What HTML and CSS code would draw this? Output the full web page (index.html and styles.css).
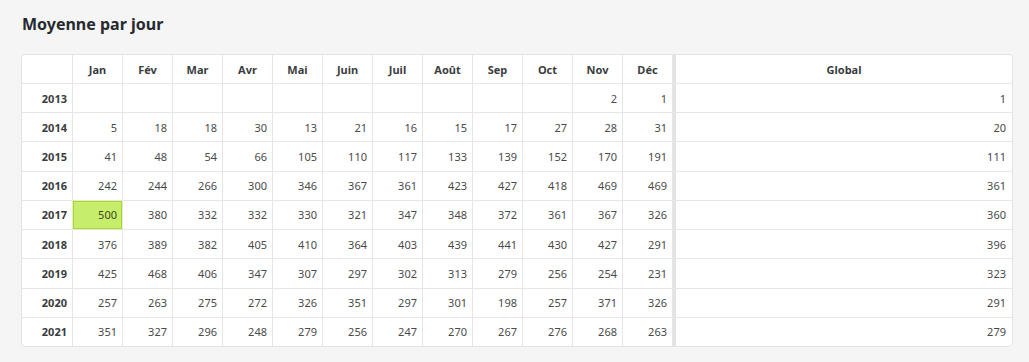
FILE: index.html
```html
<!DOCTYPE html>
<html lang="fr">
<head>
<meta charset="utf-8">
<title>Moyenne par jour</title>
<link rel="stylesheet" href="styles.css">
</head>
<body>
<section class="panel">
  <h2 class="title">Moyenne par jour</h2>
  <div class="table-wrap">
    <table class="stats">
      <colgroup>
        <col class="c-year">
        <col class="c-m"><col class="c-m"><col class="c-m"><col class="c-m"><col class="c-m"><col class="c-m">
        <col class="c-m"><col class="c-m"><col class="c-m"><col class="c-m"><col class="c-m"><col class="c-m">
        <col class="c-global">
      </colgroup>
      <thead>
        <tr>
          <th></th>
          <th>Jan</th><th>Fév</th><th>Mar</th><th>Avr</th><th>Mai</th><th>Juin</th>
          <th>Juil</th><th>Août</th><th>Sep</th><th>Oct</th><th>Nov</th><th>Déc</th>
          <th class="global">Global</th>
        </tr>
      </thead>
      <tbody>
        <tr><th>2013</th><td></td><td></td><td></td><td></td><td></td><td></td><td></td><td></td><td></td><td></td><td>2</td><td>1</td><td class="global">1</td></tr>
        <tr><th>2014</th><td>5</td><td>18</td><td>18</td><td>30</td><td>13</td><td>21</td><td>16</td><td>15</td><td>17</td><td>27</td><td>28</td><td>31</td><td class="global">20</td></tr>
        <tr><th>2015</th><td>41</td><td>48</td><td>54</td><td>66</td><td>105</td><td>110</td><td>117</td><td>133</td><td>139</td><td>152</td><td>170</td><td>191</td><td class="global">111</td></tr>
        <tr><th>2016</th><td>242</td><td>244</td><td>266</td><td>300</td><td>346</td><td>367</td><td>361</td><td>423</td><td>427</td><td>418</td><td>469</td><td>469</td><td class="global">361</td></tr>
        <tr><th>2017</th><td class="max">500</td><td>380</td><td>332</td><td>332</td><td>330</td><td>321</td><td>347</td><td>348</td><td>372</td><td>361</td><td>367</td><td>326</td><td class="global">360</td></tr>
        <tr><th>2018</th><td>376</td><td>389</td><td>382</td><td>405</td><td>410</td><td>364</td><td>403</td><td>439</td><td>441</td><td>430</td><td>427</td><td>291</td><td class="global">396</td></tr>
        <tr><th>2019</th><td>425</td><td>468</td><td>406</td><td>347</td><td>307</td><td>297</td><td>302</td><td>313</td><td>279</td><td>256</td><td>254</td><td>231</td><td class="global">323</td></tr>
        <tr><th>2020</th><td>257</td><td>263</td><td>275</td><td>272</td><td>326</td><td>351</td><td>297</td><td>301</td><td>198</td><td>257</td><td>371</td><td>326</td><td class="global">291</td></tr>
        <tr><th>2021</th><td>351</td><td>327</td><td>296</td><td>248</td><td>279</td><td>256</td><td>247</td><td>270</td><td>267</td><td>276</td><td>268</td><td>263</td><td class="global">279</td></tr>
      </tbody>
    </table>
  </div>
</section>
</body>
</html>
```

FILE: styles.css
```css
html, body {
  margin: 0;
  padding: 0;
  background: #f5f5f5;
}

body {
  font-family: "Noto Sans", "DejaVu Sans", sans-serif;
  color: #444;
}

.panel {
  padding: 11px 16px 15px 21px;
}

.title {
  margin: 0 0 17px 1px;
  font-size: 16px;
  line-height: 26px;
  font-weight: 700;
  color: #262a2f;
}

.table-wrap {
  background: #fff;
  border: 1px solid #e3e3e3;
  border-radius: 4px;
  overflow: hidden;
}

.stats {
  width: 100%;
  table-layout: fixed;
  border-collapse: separate;
  border-spacing: 0;
  font-size: 11px;
}

.c-year { width: 51px; }
.c-m { width: 50px; }
.c-global { width: auto; }

.stats th,
.stats td {
  padding: 0 5px 0 4px;
  border-right: 1px solid #e6e6e6;
  border-bottom: 1px solid #e6e6e6;
  text-align: right;
  white-space: nowrap;
  overflow: hidden;
}

.stats thead th {
  height: 28px;
  text-align: center;
  font-weight: 700;
  color: #3a3d40;
  padding: 0;
}

.stats tbody th,
.stats tbody td {
  height: 28.22px;
}

.stats tbody th {
  font-weight: 700;
  color: #3a3d40;
  padding-right: 5px;
}

.stats td {
  color: #4a4a4a;
}

.stats tr > :last-child {
  border-right: none;
}

.stats tbody tr:last-child > * {
  border-bottom: none;
}

.stats .global {
  border-left: 3px solid #e3e3e3;
  padding-right: 6px;
}

.stats thead .global {
  padding-right: 0;
}

.stats td.max {
  background: #c7ee6b;
  box-shadow: inset 0 0 0 1px #a5dc1b;
  color: #3f4a20;
}
```
